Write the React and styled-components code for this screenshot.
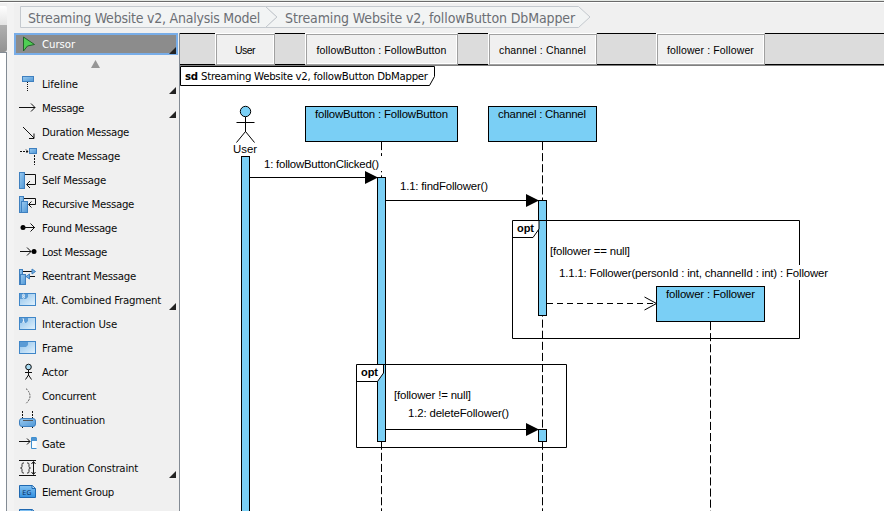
import React, { useLayoutEffect, useRef, useState } from "react";
import styled, { createGlobalStyle } from "styled-components";

const Global = createGlobalStyle`
  body { margin: 0; overflow: hidden; background: #f0f0f0; }
  * { box-sizing: border-box; }
`;
const UI_FONT = '"DejaVu Sans Condensed", "DejaVu Sans", sans-serif';

const Window = styled.div`
  width: 884px; height: 511px; overflow: hidden; background: #f0f0f0;
  display: flex; flex-direction: column; color: #000;
`;
const TopRule = styled.div`
  height: 3px; flex: none; background: #6a6a6a;
  border-top: 1px solid #e4e8e4; border-bottom: 1px solid #fff;
`;
const Body = styled.div`display: flex; flex: 1; min-height: 0;`;
const EdgeStrip = styled.div`width: 7px; flex: none; display: flex; flex-direction: column; padding-top: 3px;`;
const EdgeTab = styled.div`
  height: 46px; flex: none; border-radius: 0 2px 3px 0;
  background: linear-gradient(#fff 0, #e4e4e4 19px, #b0b0b0 19px, #929292 100%);
`;
const EdgePage = styled.div`flex: 1; background: #fff; border-right: 1px solid #838b94; border-top: 1px solid #838b94;`;
const Main = styled.div`flex: 1; min-width: 0; display: flex; flex-direction: column; border-left: 7px solid #f3f3f3;`;
const Crumbs = styled.div`height: 30px; flex: none; padding: 3px 0 0 6px; display: flex;`;
const Crumb = styled.div`
  position: relative; width: ${(p) => p.$w}px; height: 22px; padding-left: 8px;
  font: 14px/24px ${UI_FONT}; color: #6c6f74; white-space: nowrap;
`;
const CrumbShape = styled.svg`position: absolute; left: 0; top: 0; overflow: visible;`;
const CrumbText = styled.span`position: relative;`;
const Work = styled.div`flex: 1; min-height: 0; display: flex;`;
const Palette = styled.div`width: 166px; flex: none; border-right: 1px solid #838b94; overflow: hidden;`;
const Tool = styled.div`
  height: 24px; padding-left: 5px; display: flex; align-items: center; gap: 5px; position: relative;
  font: 11.3px/24px ${UI_FONT}; color: #0a0a0a; white-space: nowrap;
`;
const ToolName = styled.span`padding-top: 1px;`;
const ActiveTool = styled(Tool)`
  height: 22px; width: 164px; padding-left: 3px; background: #8c8c8c; border: 2px solid #78ade8; color: #fff;
  line-height: 18px;
`;
const Scroll = styled.div`height: 17px; display: flex; justify-content: center; padding: 5px 2px 0 0;`;
const Corner = styled.svg`position: absolute; right: ${(p) => p.$r}px; bottom: ${(p) => p.$b}px;`;
const Canvas = styled.div`flex: 1; min-width: 0; display: flex; flex-direction: column; background: #fff;`;
const Header = styled.div`
  height: 33px; flex: none; display: flex; background: #dcdcdc; border-bottom: 1px solid #808080;
  box-shadow: inset 0 1px #000, inset 0 -1px #000;
`;
const HeadTab = styled.div`
  width: ${(p) => p.$w}px; margin-left: ${(p) => p.$gap}px; height: 32px; padding-top: 1px; background: #f0f0f0;
  border: 1px solid; border-color: #fff #a0a0a0 #a0a0a0 #fff;
  box-shadow: inset 1px 1px #a0a0a0, inset -1px -1px #fff;
  display: flex; justify-content: center; font: 10.5px/31px "Liberation Sans", Arial, sans-serif; white-space: nowrap;
`;
const Diagram = styled.svg`display: block; flex: none;`;
const Label = styled.text`font: ${(p) => (p.$bold ? "bold 11px" : "11.4px")} "Liberation Sans", Arial, sans-serif;`;
const SansLabel = styled.text`font: ${(p) => (p.$bold ? "bold " : "")}11.3px ${UI_FONT};`;
const Line = styled.path`fill: none; stroke: #000; stroke-width: 1; stroke-dasharray: ${(p) => p.$dash || "none"};`;
const Block = styled.rect`fill: #7acff5; stroke: #000;`;

/* Spreads its letters so that the run takes the given width. */
function Fitted({ w, children }) {
  const ref = useRef(null);
  const [spacing, setSpacing] = useState(0);
  useLayoutEffect(() => {
    const natural = ref.current.getBoundingClientRect().width;
    setSpacing((w - natural) / children.length);
  }, [w, children]);
  return <span ref={ref} style={{ letterSpacing: spacing }}>{children}</span>;
}

const blue = { fill: "url(#toolBlue)", stroke: "#3f80bf" };
const ink = { fill: "none", stroke: "#111" };
const frame = (
  <>
    <rect x=".5" y="2.500" width="16" height="12" fill="url(#toolPale)" stroke="#3f86c8" />
    <path d="M1 3h8v3l-2 2H1z" fill="#5b9bd5" />
  </>
);
const card = (
  <>
    <path d="M.5 2.500h13l3 3v9H.5z" fill="url(#groupBlue)" stroke="#1f68b0" />
    <path d="M13 2.500v3h3" fill="#c5e4fa" stroke="#1f68b0" />
  </>
);
const icons = {
  cursor: <path d="M4.500 2v14l4-5 7-1.500z" fill="#4fce54" stroke="#23642a" />,
  lifeline: <><rect x="3.500" y="1.500" width="11" height="5" {...blue} /><path d="M8.500 7v9" {...ink} strokeDasharray="1 1" /></>,
  message: <path d="M0 8.500h16M12 4.500l4 4-4 4" {...ink} />,
  duration: <path d="M4 4l11 11M15 10.500v5h-5" {...ink} />,
  create: <><path d="M1 4.500h8M7 2.500l2 2-2 2M15.500 8v10" {...ink} strokeDasharray="2 1" /><rect x="10.500" y="1.500" width="7" height="5" {...blue} /></>,
  self: <><rect x=".5" y="1.500" width="5" height="16" {...blue} /><path d="M6 3.500h10.500v10H8M11 10l-3.500 3.500L11 17" {...ink} /></>,
  recursive: <><rect x=".5" y="1.500" width="4" height="16" {...blue} /><rect x="2.500" y="6.500" width="6" height="11" {...blue} /><path d="M5 3.500h11.500v6H10M12.500 6.500l-3 3 3 3" {...ink} /></>,
  found: <><circle cx="4" cy="8.500" r="2.500" /><path d="M4 8.500h12M11.500 4.500l4 4-4 4" {...ink} /></>,
  lost: <><path d="M1 8.500h11M8 4.500l4 4-4 4" {...ink} /><circle cx="15" cy="8.500" r="2.500" /></>,
  reentrant: <><rect x=".5" y="2.500" width="3" height="15" {...blue} /><rect x="1.500" y="7.500" width="5" height="10" {...blue} /><path d="M4 4.500h10M9 9.500h7" {...ink} /><path d="M13 2l3.500 2.500L13 7zM10.500 7L7 9.500l3.500 2.500z" {...blue} /></>,
  alt: <>{frame}<circle cx="4.500" cy="4.200" r="1" fill="none" stroke="#fff" strokeWidth=".8" /><circle cx="4.500" cy="6.200" r="1" fill="none" stroke="#fff" strokeWidth=".8" /></>,
  use: <>{frame}<path d="M3.500 3.800h1v3.400M3 7.200h3" fill="none" stroke="#fff" strokeWidth=".8" /></>,
  frame,
  actor: <><circle cx="9.500" cy="4" r="2.800" fill="#a9dcf4" stroke="#111" /><path d="M9.500 6.500v6M6 9.500h7M9.500 12l-3 4.500M9.500 12l3 4.500" {...ink} /></>,
  concurrent: <path d="M7 1.500q8 7.500 0 15" fill="none" stroke="#555" strokeDasharray="2 1" />,
  continuation: <><path d="M3.500 0v18M13.500 0v18" {...ink} strokeDasharray="2 1" /><rect x=".5" y="7.500" width="16" height="8" rx="2.500" {...blue} /><path d="M4 9.500h10" stroke="#555" /></>,
  gate: <><path d="M0 6.500h11M8 3.500l3 3-3 3" {...ink} /><path d="M17.500 2.500h-5v11h5" fill="#f8fcff" stroke="#3f8fd0" /><path d="M13 3h5v3h-5z" fill="#4c94d2" /></>,
  constraint: <><path d="M0 1.500h17M0 16.500h17M14.500 3v12M12.500 5l2-2.500 2 2.500M12.500 13l2 2.500 2-2.500" {...ink} /><path d="M5 4H4Q3 4 3 5.500v2q0 1.500-1.500 1.500Q3 9 3 10.500v2q0 1.500 1 1.500h1M8 4h1q1 0 1 1.500v2q0 1.500 1.500 1.500Q10 9 10 10.500v2q0 1.500-1 1.500H8" fill="none" stroke="#333" /></>,
  group: <>{card}<text x="3.300" y="11.800" fontFamily="DejaVu Sans" fontSize="6.500" fill="#082f60">EG</text></>,
  card,
};
const Icon = ({ name }) => <svg width="18" height="18" viewBox="0 0 18 18">{icons[name]}</svg>;

const tools = [
  ["lifeline", "Lifeline", 36, 1], ["message", "Message", 42, 1], ["duration", "Duration Message", 87],
  ["create", "Create Message", 78], ["self", "Self Message", 64], ["recursive", "Recursive Message", 92],
  ["found", "Found Message", 75], ["lost", "Lost Message", 65], ["reentrant", "Reentrant Message", 94],
  ["alt", "Alt. Combined Fragment", 119, 1], ["use", "Interaction Use", 75], ["frame", "Frame", 31],
  ["actor", "Actor", 26], ["concurrent", "Concurrent", 54], ["continuation", "Continuation", 63],
  ["gate", "Gate", 23], ["constraint", "Duration Constraint", 96, 1], ["group", "Element Group", 72], ["card", "", 0],
];
const More = ({ r = 3, b = 2 }) => <Corner $r={r} $b={b} width="7" height="7"><path d="M7 0v7H0z" fill="#222" /></Corner>;
const T = ({ x, y, w, bold, children }) => (
  <Label x={x} y={y} $bold={bold} textLength={w}>{children}</Label>
);

export default function App() {
  return (
    <Window>
      <Global />
      <TopRule />
      <Body>
        <EdgeStrip><EdgeTab /><EdgePage /></EdgeStrip>
        <Main>
          <Crumbs>
            <Crumb $w={257}>
              <CrumbShape width="260" height="22">
                <defs>
                  <linearGradient id="toolBlue" x2="1" y2="1"><stop stopColor="#9ccbf0" /><stop offset="1" stopColor="#4f97d6" /></linearGradient>
                  <linearGradient id="toolPale" x2="1" y2="1"><stop stopColor="#8cc0ea" /><stop offset="1" stopColor="#e4f3fd" /></linearGradient>
                  <linearGradient id="groupBlue" x2="0" y2="1"><stop stopColor="#83c2f2" /><stop offset="1" stopColor="#3390e0" /></linearGradient>
                </defs>
                <path d="M245.500.5H.5v21h245l11.500-10.500z" fill="#f2f4f4" stroke="#c4c9ce" />
              </CrumbShape>
              <CrumbText><Fitted w={232}>Streaming Website v2, Analysis Model</Fitted></CrumbText>
            </Crumb>
            <Crumb $w={325}>
              <CrumbShape width="325" height="22"><path d="M-11.500.5h313l11.500 10.500-11.500 10.500h-313L0 11z" fill="#f2f4f4" stroke="#c4c9ce" /></CrumbShape>
              <CrumbText><Fitted w={290}>Streaming Website v2, followButton DbMapper</Fitted></CrumbText>
            </Crumb>
          </Crumbs>
          <Work>
            <Palette>
              <ActiveTool><Icon name="cursor" /><ToolName><Fitted w={33}>Cursor</Fitted></ToolName><More r={0} b={-1} /></ActiveTool>
              <Scroll><svg width="9" height="8"><path d="M4.500 0l4.500 8H0z" fill="#969696" /></svg></Scroll>
              {tools.map(([icon, name, w, more], i) => (
                <Tool key={i}><Icon name={icon} />{name && <ToolName><Fitted w={w}>{name}</Fitted></ToolName>}{more && <More />}</Tool>
              ))}
            </Palette>
            <Canvas>
              <Header>
                <HeadTab $gap={35} $w={60}><Fitted w={20}>User</Fitted></HeadTab>
                <HeadTab $gap={30} $w={153}><Fitted w={130}>followButton : FollowButton</Fitted></HeadTab>
                <HeadTab $gap={30} $w={109}><Fitted w={87}>channel : Channel</Fitted></HeadTab>
                <HeadTab $gap={59} $w={109}><Fitted w={87}>follower : Follower</Fitted></HeadTab>
              </Header>
              <Diagram width="704" height="445" viewBox="180 66 704 445">
                <Line d="M180.500 66.500H434.500V76.500L429.500 85.500H180.500z" />
                <SansLabel x="185" y="80" $bold textLength="13">sd</SansLabel>
                <SansLabel x="201" y="80" textLength="227">Streaming Website v2, followButton DbMapper</SansLabel>

                <circle cx="245.500" cy="111.500" r="5.200" fill="#7acff5" stroke="#000" />
                <Line d="M245.500 117v15M236.500 122.500h18M245.500 131.500l-9 11M245.500 131.500l9 11" />
                <T x={233} y={153} w={24}>User</T>

                <Line d="M381.500 142v369M542.500 142v369M710.500 322v189" $dash="8.100 3" />
                <rect x="374" y="156" width="10" height="15" fill="#fff" />
                <Block x="241.500" y="156.500" width="8" height="360" />
                <Block x="377.500" y="177.500" width="8" height="264" />
                <Block x="538.500" y="200.500" width="8" height="115" />
                <Block x="538.500" y="429.500" width="8" height="12" />
                <Block x="305.500" y="106.500" width="152" height="35" />
                <Block x="488.500" y="106.500" width="108" height="35" />
                <T x={315} y={118} w={133}>followButton : FollowButton</T>
                <T x={498} y={118} w={88}>channel : Channel</T>

                <Line d="M250 177.500H366M386 200.500H527M386 429.500H527" />
                <path d="M365 171v13l13-6.500zM526 194v13l13-6.500zM526 423v13l13-6.500z" />
                <T x={264} y={168} w={115}>1: followButtonClicked()</T>
                <T x={400} y={190} w={88}>1.1: findFollower()</T>

                <Line d="M512.500 220.500H799.500V338.500H512.500z" />
                <path d="M513 221h26v8l-6 8.500H513z" fill="#fff" />
                <Line d="M512.500 237.500h20.500l6-8.500v-8.500" />
                <T x={517} y={232} w={17} bold>opt</T>
                <T x={550} y={255} w={80}>[follower == null]</T>
                <rect x="796" y="265" width="33" height="15" fill="#fff" />
                <T x={559} y={277} w={269}>1.1.1: Follower(personId : int, channelId : int) : Follower</T>
                <Block x="656.500" y="286.500" width="108" height="35" />
                <T x={666} y={298} w={89}>follower : Follower</T>
                <Line d="M547 303.500H656" $dash="6 4" />
                <Line d="M644.500 297l12 6.500-12 6.500" />

                <Line d="M356.500 364.500H566.500V447.500H356.500z" />
                <path d="M357 365h26.500v8l-6 8.500H357z" fill="#fff" />
                <Line d="M356.500 381.500h21l6-8.500v-8.500" />
                <T x={361} y={376} w={17} bold>opt</T>
                <T x={394} y={399} w={77}>[follower != null]</T>
                <T x={408} y={417} w={101}>1.2: deleteFollower()</T>
              </Diagram>
            </Canvas>
          </Work>
        </Main>
      </Body>
    </Window>
  );
}
